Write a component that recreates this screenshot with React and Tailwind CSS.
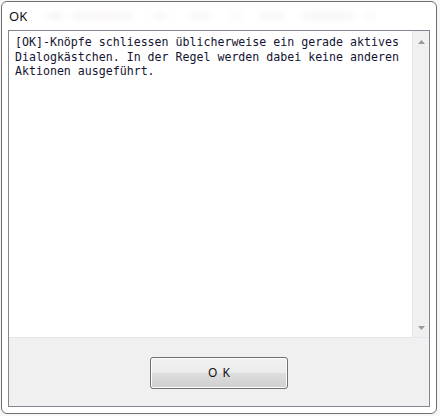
import React from "react";

export default function App() {
  const smudges = [
    { w: 16, ml: 18, c: "bg-[#e2e2e6]" },
    { w: 60, ml: 10, c: "bg-[#eee2ec]" },
    { w: 14, ml: 20, c: "bg-[#e8e8e8]" },
    { w: 20, ml: 24, c: "bg-[#eae6ee]" },
    { w: 10, ml: 20, c: "bg-[#ececec]" },
    { w: 26, ml: 18, c: "bg-[#e8e8e8]" },
    { w: 50, ml: 18, c: "bg-[#e8e4ea]" },
    { w: 10, ml: 12, c: "bg-[#ececec]" },
  ];
  return (
    <div className="w-[440px] h-[416px] bg-[#f7f7f7] overflow-hidden">
      <div className="ml-[1px] mt-[1px] w-[436px] h-[413px] border border-[#6f6f6f] rounded-[6px] bg-white flex flex-col px-[6px] pb-[6px]">
        <div className="h-[28px] flex items-center">
          <span className="text-[13px] leading-none text-[#111] pl-[1px] pt-[1px]" style={{ fontFamily: '"Noto Sans", "Open Sans", sans-serif' }}>
            OK
          </span>
          <div className="flex items-center ml-[2px]">
            {smudges.map((s, i) => (
              <div
                key={i}
                className={`h-[4px] rounded-full blur-[3px] opacity-60 ${s.c}`}
                style={{ width: s.w, marginLeft: s.ml }}
              />
            ))}
          </div>
        </div>
        <div className="flex-1 border border-[#828790] flex flex-col">
          <div className="h-[307px] flex bg-white border-b border-[#e3e8ef]">
            <div
              className="flex-1 pl-[6px] pt-[4px] pr-[4px] text-[11.6px] leading-[14.7px] text-[#141432] whitespace-pre"
              style={{ fontFamily: '"DejaVu Sans Mono", "Liberation Mono", monospace' }}
            >
              {"[OK]-Knöpfe schliessen üblicherweise ein gerade aktives\nDialogkästchen. In der Regel werden dabei keine anderen\nAktionen ausgeführt."}
            </div>
            <div className="w-[17px] bg-[#f0f0f0] border-l border-[#e8e8e8] flex flex-col items-center justify-between pt-[9px] pb-[7px]">
              <svg width="7" height="4" viewBox="0 0 7 4">
                <path d="M0 4 L3.5 0 L7 4 Z" fill="#9a9a9a" />
              </svg>
              <svg width="7" height="4" viewBox="0 0 7 4">
                <path d="M0 0 L7 0 L3.5 4 Z" fill="#9a9a9a" />
              </svg>
            </div>
          </div>
          <div className="flex-1 bg-[#f0f0f0] flex justify-center pt-[19px]">
            <div className="w-[138px] h-[32px] rounded-[3px] border border-[#707070] bg-[linear-gradient(to_bottom,#f2f2f2_0%,#ebebeb_48%,#dddddd_52%,#cfcfcf_100%)] flex items-center justify-center gap-[5px] shadow-[inset_0_0_0_1px_#fcfcfc]">
              <span className="text-[12px] text-[#111] leading-none" style={{ fontFamily: '"Noto Sans", "Open Sans", sans-serif' }}>
                O
              </span>
              <span className="text-[12px] text-[#111] leading-none" style={{ fontFamily: '"Noto Sans", "Open Sans", sans-serif' }}>
                K
              </span>
            </div>
          </div>
        </div>
      </div>
    </div>
  );
}
